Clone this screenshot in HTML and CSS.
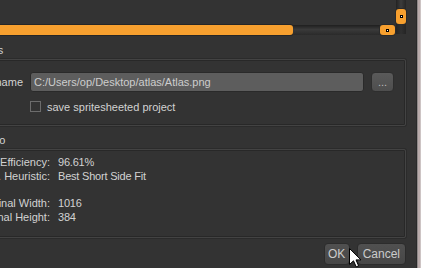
FILE: index.html
```html
<!DOCTYPE html>
<html>
<head>
    <meta charset="UTF-8">
    <title>Export Atlas</title>
    <link rel="stylesheet" href="styles.css">
</head>
<body>
    <div class="window">
        <div class="dialog">
            <div class="preview">
                <div class="hbar">
                    <div class="hbar-fill"></div>
                    <div class="hbar-track"></div>
                    <div class="handle h-handle"><span class="dot"></span></div>
                </div>
                <div class="vbar">
                    <div class="vbar-track"></div>
                    <div class="handle v-handle"><span class="dot"></span></div>
                    <div class="vbar-track low"></div>
                </div>
            </div>

            <div class="group-title title-output">Output Files</div>
            <div class="group settings">
                <div class="label">File name</div>
                <input class="path" type="text" value="C:/Users/op/Desktop/atlas/Atlas.png">
                <button class="browse">...</button>
                <label class="check-row">
                    <span class="checkbox"></span>
                    <span>save spritesheeted project</span>
                </label>
            </div>

            <div class="group-title title-info">Info</div>
            <div class="group info">
                <div class="label">Packing Efficiency:</div><div class="value">96.61%</div>
                <div class="label">Pack. Heuristic:</div><div class="value">Best Short Side Fit</div>
                <div class="spacer"></div>
                <div class="label">Final Width:</div><div class="value">1016</div>
                <div class="label">Final Height:</div><div class="value">384</div>
            </div>

            <div class="actions">
                <button class="btn ok">OK</button>
                <button class="btn">Cancel</button>
            </div>
        </div>
        <div class="frame-edge"></div>
    </div>

    <svg class="cursor" width="13" height="20" viewBox="0 0 13 20">
        <path d="M0.5 0.5 L0.5 16.5 L4.5 12.8 L7.2 18.8 L9.6 17.8 L7 11.9 L12 11.9 Z" fill="#ffffff" stroke="#000000" stroke-width="1"/>
    </svg>
</body>
</html>
```

FILE: styles.css
```css
body {
    margin: 0;
    background: #333333;
    font-family: 'Liberation Sans', Arial, sans-serif;
    font-size: 11px;
    color: #d2d2d2;
    overflow: hidden;
}

.window {
    display: flex;
    height: 268px;
    overflow: hidden;
}

.dialog {
    flex: 1;
    margin-left: -60px;
    padding-right: 10px;
    display: flex;
    flex-direction: column;
}

.frame-edge {
    width: 5px;
    background: linear-gradient(to right, #2a2a2a 0 1px, #8e8888 1px 2px, #b9abab 2px 4px, #cdc4c4 4px);
}

/* scroll bars of the preview above */
.preview {
    display: flex;
    height: 35px;
    gap: 1px;
}

.hbar {
    flex: 1;
    display: flex;
    align-self: flex-end;
    height: 10px;
}

.hbar-fill {
    flex: 1;
    background: #f7a02f;
    border-radius: 0 3px 3px 0;
    box-shadow: 0 0 0 1px #262626;
}

.hbar-track {
    width: 87px;
    background: linear-gradient(to bottom, #1f1f1f, #3a3a3a 45%, #2a2a2a);
}

.vbar {
    width: 10px;
    display: flex;
    flex-direction: column;
}

.vbar-track {
    height: 9px;
    background: linear-gradient(to right, #222, #3c3c3c 50%, #262626);
}

.vbar-track.low {
    height: 10px;
    background: linear-gradient(to right, #242424, #303030 50%, #252525);
}

.handle {
    background: #f7a02f;
    border-radius: 3px;
    display: flex;
    align-items: center;
    justify-content: center;
    box-shadow: 0 0 0 1px #2a2a2a;
}

.h-handle {
    width: 15px;
}

.v-handle {
    height: 15px;
}

.dot {
    width: 1px;
    height: 1px;
    border: 1px solid #000;
    background: #fff;
}

/* group boxes */
.group-title {
    line-height: 14px;
    margin-top: 8px;
    margin-bottom: 2px;
}

.title-output {
    padding-left: 4px;
}

.title-info {
    padding-left: 47px;
    margin-top: 7px;
}

.group {
    border: 1px solid #434343;
    border-radius: 2px;
    box-shadow: inset 0 0 0 1px #282828, 0 0 0 1px #2b2b2b;
}

.settings {
    display: grid;
    grid-template-columns: 82px 1fr 23px;
    column-gap: 7px;
    row-gap: 8px;
    padding: 12px 11px 12px 0;
    height: 41px;
    align-items: center;
}

.label {
    text-align: right;
    white-space: nowrap;
}

.path {
    height: 20px;
    box-sizing: border-box;
    margin: 0;
    padding: 0 3px;
    border: 1px solid #2a2a2a;
    border-radius: 3px;
    background: #5d5d5d;
    color: #cdcdcd;
    font-family: inherit;
    font-size: 11px;
    outline: none;
}

.browse {
    height: 20px;
    margin: 0;
    padding: 0 0 3px;
    border: 1px solid #2e2e2e;
    border-radius: 4px;
    background: linear-gradient(to bottom, #5a5a5a, #4e4e4e);
    color: #bcbcbc;
    font-family: inherit;
    font-size: 11px;
    line-height: 11px;
    display: flex;
    align-items: flex-end;
    justify-content: center;
}

.check-row {
    grid-column: 2 / 4;
    display: flex;
    align-items: center;
    gap: 6px;
    height: 12px;
}

.checkbox {
    width: 9px;
    height: 9px;
    border: 1px solid #6c6c6c;
    background: #333;
}

.info {
    display: grid;
    grid-template-columns: 109px 1fr;
    grid-template-rows: 14px 14px 13px 14px 14px;
    column-gap: 8px;
    align-items: center;
    align-content: start;
    padding: 5px 0 0;
    height: 82px;
    line-height: 14px;
}

.info .spacer {
    grid-column: 1 / 3;
}

.value {
    letter-spacing: -0.2px;
}

.actions {
    display: flex;
    justify-content: flex-end;
    gap: 7px;
    margin-top: 5px;
}

.btn {
    height: 22px;
    margin: 0;
    padding: 0 5px;
    border: 1px solid #2c2c2c;
    border-radius: 4px;
    background: linear-gradient(to bottom, #505050, #474747);
    color: #cbcbcb;
    font-family: inherit;
    font-size: 12px;
}

.btn.ok {
    width: 26px;
    padding: 0;
}

.cursor {
    position: absolute;
    left: 349px;
    top: 248px;
}
```
